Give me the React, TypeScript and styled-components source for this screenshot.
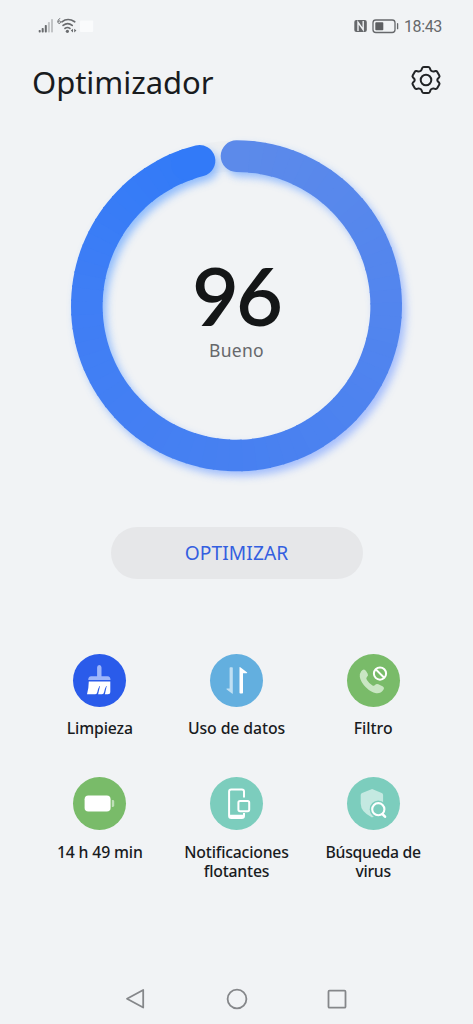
import React from "react";
import styled, { createGlobalStyle } from "styled-components";

const GlobalStyle = createGlobalStyle`
  * { box-sizing: border-box; }
  body {
    margin: 0;
    background: #f1f3f5;
    color: #191b1e;
    font-family: "Noto Sans", "Open Sans", sans-serif;
  }
  svg { display: block; flex: none; }
`;

const Screen = styled.main`
  width: 473px;
  height: 1024px;
  display: flex;
  flex-direction: column;
  overflow: hidden;
  background: #f1f3f5;
`;

const StatusBar = styled.div`
  height: 52px;
  padding: 0 31px 0 38px;
  display: flex;
  align-items: center;
  justify-content: space-between;
`;

const StatusTime = styled.span`
  width: 38px;
  color: #66686b;
  font: 400 16px/20px Roboto, sans-serif;
  letter-spacing: -0.4px;
  padding-top: 1px;
  white-space: nowrap;
`;

const StatusGroup = styled.div`
  display: flex;
  align-items: center;
  gap: 5px;
`;

const Header = styled.header`
  height: 56px;
  padding: 0 31px 0 32px;
  display: flex;
  align-items: center;
  justify-content: space-between;
`;

const Title = styled.h1`
  margin: 0;
  padding-top: 3px;
  font-size: 31px;
  font-weight: 400;
  line-height: 44px;
  letter-spacing: -0.05px;
`;

const Gauge = styled.section`
  height: 388px;
  margin-top: 4px;
  display: grid;
  > * { grid-area: 1 / 1; }
`;

const ScoreBlock = styled.div`
  display: flex;
  flex-direction: column;
  align-items: center;
  padding-top: 141px;
`;

const Score = styled.div`
  font-family: Lato, sans-serif;
  font-size: 81px;
  font-weight: 600;
  line-height: 84px;
  letter-spacing: -3px;
  margin-right: 1px;
  color: #141617;
`;

const Rating = styled.div`
  margin-top: 1px;
  font-size: 17.5px;
  line-height: 24px;
  letter-spacing: 0.3px;
  color: #66686b;
`;

const OptimizeButton = styled.button`
  align-self: center;
  margin: 27px 0 0;
  width: 252px;
  height: 52px;
  border: 0;
  border-radius: 26px;
  background: #e6e7e9;
  color: #345fe0;
  font: 400 19.2px/26px "Noto Sans", sans-serif;
  letter-spacing: 0.1px;
`;

const Tools = styled.section`
  margin: 74.5px 31.5px 0;
  display: grid;
  grid-template-columns: repeat(3, 1fr);
  grid-auto-rows: 123.5px;
`;

const Tool = styled.div`
  display: flex;
  flex-direction: column;
  align-items: center;
  gap: 12.5px;
`;

const ToolIcon = styled.div<{ $color: string }>`
  width: 53px;
  height: 53px;
  border-radius: 50%;
  background: ${(p) => p.$color};
`;

const ToolLabel = styled.div<{ $spacing: number }>`
  font-size: 15.8px;
  font-weight: 500;
  line-height: 19px;
  letter-spacing: ${(p) => p.$spacing}px;
  text-align: center;
  white-space: pre-line;
`;

const NavBar = styled.nav`
  margin-top: auto;
  height: 51px;
  padding: 0 125px;
  display: flex;
  align-items: center;
  justify-content: space-between;
`;

const CX = 236.5;
const CY = 193.8;
const R = 149.7;
const STOPS: [number, number[]][] = [
  [0, [92, 138, 234]],
  [90, [82, 133, 238]],
  [180, [71, 128, 241]],
  [270, [63, 126, 245]],
  [345.7, [49, 122, 248]],
];

const point = (deg: number) => {
  const a = (deg * Math.PI) / 180;
  return `${(CX + R * Math.sin(a)).toFixed(2)} ${(CY - R * Math.cos(a)).toFixed(2)}`;
};

const colorAt = (deg: number) => {
  let i = 0;
  while (i < STOPS.length - 2 && deg > STOPS[i + 1][0]) i++;
  const [a, from] = STOPS[i];
  const [b, to] = STOPS[i + 1];
  const t = Math.min(1, (deg - a) / (b - a));
  return `rgb(${from.map((v, k) => Math.round(v + (to[k] - v) * t)).join(",")})`;
};

const END = 345.7;
const STEPS = 70;

const Ring = () => (
  <svg width="473" height="388" viewBox="0 0 473 388" fill="none">
    <defs>
      <filter id="glow" x="-10%" y="-10%" width="125%" height="125%">
        <feGaussianBlur stdDeviation="4" />
      </filter>
      <linearGradient id="glowFill" gradientUnits="userSpaceOnUse" x1="90" y1="90" x2="370" y2="310">
        <stop stopColor="#69a9ff" />
        <stop offset="1" stopColor="#8cabff" />
      </linearGradient>
    </defs>
    <circle cx={CX} cy={CY} r={R} stroke="#edeff1" strokeWidth="31" />
    <path
      d={`M${point(0)}A${R} ${R} 0 1 1 ${point(END)}`}
      stroke="url(#glowFill)"
      strokeWidth="31"
      strokeLinecap="round"
      filter="url(#glow)"
      transform="translate(4 5)"
      opacity=".75"
    />
    {Array.from({ length: STEPS }, (_, i) => {
      const from = (END / STEPS) * i;
      const to = Math.min(END, (END / STEPS) * (i + 1) + 0.6);
      return (
        <path
          key={i}
          d={`M${point(from)}A${R} ${R} 0 0 1 ${point(to)}`}
          stroke={colorAt(from)}
          strokeWidth="31.6"
          strokeLinecap={i === 0 || i === STEPS - 1 ? "round" : "butt"}
        />
      );
    })}
  </svg>
);

const SignalIcons = () => (
  <svg width="56" height="20" viewBox="38 16 56 20" fill="none">
    <g fill="#696b6e">
      <rect x="38.7" y="30" width="2" height="2.5" rx=".7" />
      <rect x="41.7" y="28" width="2" height="4.5" rx=".7" />
      <rect x="44.8" y="25" width="2" height="7.5" rx=".7" />
      <g opacity=".35">
        <rect x="47.9" y="22" width="2" height="10.5" rx=".7" />
        <rect x="51" y="19" width="2" height="13.5" rx=".7" />
      </g>
      <circle cx="67.4" cy="31.3" r="1.6" />
      <path d="M73 28.8v3.6l-2.2-1.8zM74.2 28.8v3.6l2.2-1.8z" />
    </g>
    <path d="M60.2 18.5c-1.6.4-2.3 1.6-2.3 3.3 0 1 .5 1.7 1.3 1.7s1.3-.6 1.3-1.4-.5-1.3-1.2-1.3-1.2.5-1.3 1" stroke="#696b6e" strokeWidth="1" />
    <path d="M61.9 21.8q6-4.6 12.8 0M63.1 25.4q4.6-3.7 9.1 0M65 28.4q2.4-1.8 4.9 0" stroke="#696b6e" strokeWidth="1.7" strokeLinecap="round" />
    <rect x="80" y="20.5" width="13.2" height="11.5" rx="1" fill="#fafbfc" />
  </svg>
);

const PowerIcons = () => (
  <svg width="46" height="18" viewBox="354 17 46 18" fill="none">
    <path d="M357.3 20h8.5q2 0 2 2v8q0 2-2 2h-8.5q-2 0-2-2v-8q0-2 2-2z" fill="#66686b" />
    <path d="M359 31v-8.7l5.2 7.4V21" stroke="#f1f3f5" strokeWidth="1.4" />
    <rect x="374" y="20" width="22" height="12.5" rx="2.8" stroke="#66686b" strokeWidth="1.3" />
    <rect x="376.3" y="22.3" width="8" height="8" rx=".8" fill="#5d5f62" />
    <path d="M398.6 23.7v5" stroke="#66686b" strokeWidth="1.3" strokeLinecap="round" />
  </svg>
);

const GearIcon = () => (
  <svg width="32" height="32" viewBox="-16 -16 32 32" fill="none" stroke="#222426" strokeWidth="2" strokeLinejoin="round">
    <path d="M-2.2-13.1h4.4q1.2 0 1.6 1.1l.6 1.7q.4 1 1.4 1.4 1 .5 2 .3l1.7-.3q1.2-.2 1.8.8l2 3.5q.6 1-.2 1.9l-1.1 1.2q-.7.7-.7 1.5t.7 1.5l1.1 1.2q.8.9.2 1.9l-2 3.5q-.6 1-1.8.8l-1.7-.3q-1-.2-2 .3-1 .4-1.4 1.4l-.6 1.7q-.4 1.1-1.6 1.1h-4.4q-1.2 0-1.6-1.1l-.6-1.7q-.4-1-1.4-1.4-1-.5-2-.3l-1.7.3q-1.2.2-1.8-.8l-2-3.5q-.6-1 .2-1.9l1.1-1.2q.7-.7.7-1.5t-.7-1.5l-1.1-1.2q-.8-.9-.2-1.9l2-3.5q.6-1 1.8-.8l1.7.3q1 .2 2-.3 1-.4 1.4-1.4l.6-1.7q.4-1.1 1.6-1.1z" />
    <circle r="5.3" />
  </svg>
);

const Glyph = ({ children }: { children: React.ReactNode }) => (
  <svg width="53" height="53" viewBox="0 0 53 53" fill="none">{children}</svg>
);

const tools = [
  {
    label: "Limpieza", color: "#2a5bea", spacing: -0.15,
    glyph: (
      <Glyph>
        <path d="M24.1 22.2v-8.6q0-2.6 2.2-2.6t2.2 2.6v8.6h6q3 0 3 3.8H15.2q0-3.8 3-3.8z" fill="#9eb6fa" />
        <path d="M15.8 27.6h21.5v10.2q0 2.5-2.5 2.5h-2.9l1.8-8.3h-.5q-1.4 2.5-2 5.8-.5 2.5-2.2 2.5h-3.9l1.9-8.3h-.5q-1.5 2.5-2.1 5.8-.5 2.5-2.1 2.5h-8.3q1.7-5.8 1.8-12.7z" fill="#fff" />
      </Glyph>
    ),
  },
  {
    label: "Uso de datos", color: "#63afdf", spacing: -0.1,
    glyph: (
      <Glyph>
        <path d="M22.8 14v25.2q0 .9-.8.3l-5.3-4q-1-.9.5-.9h2.4V14q0-.8.8-.8h1.6q.8 0 .8.8z" fill="#c0e0f3" />
        <path d="M29.5 38.7V13.5q0-.9.8-.3l6.6 5.1q1 .9-.5.9h-3.4v19.5q0 .8-.8.8h-1.9q-.8 0-.8-.8z" fill="#fff" />
      </Glyph>
    ),
  },
  {
    label: "Filtro", color: "#79bb69", spacing: 0,
    glyph: (
      <Glyph>
        <path d="M14.2 17.2q2.8-3.3 5 0l1.5 2.6q1 2-.8 3.3-1.2 1 0 2.8 2 3.3 5.6 5.5 1.6.9 2.5-.3 1.4-1.8 3.4-.8l4.1 2q2.5 1.6.7 3.8-2.6 3.7-7.1 3.1-5.2-.8-10.3-5.9-5.3-5.4-6-10.5-.4-3.2 1.4-5.6z" fill="#c9e6c3" />
        <circle cx="33" cy="19.6" r="6.1" stroke="#fff" strokeWidth="2" />
        <path d="m28.8 15.4 8.4 8.4" stroke="#fff" strokeWidth="2" />
      </Glyph>
    ),
  },
  {
    label: "14 h 49 min", color: "#79bb69", spacing: -0.15,
    glyph: (
      <Glyph>
        <rect x="11.6" y="18.4" width="26" height="16.2" rx="3.8" fill="#fff" />
        <path d="M38.8 23.1h1q1.4 0 1.4 1.4v4q0 1.4-1.4 1.4h-1z" fill="#bfdfb8" />
      </Glyph>
    ),
  },
  {
    label: "Notificaciones\nflotantes", color: "#7ccdbd", spacing: -0.2,
    glyph: (
      <Glyph>
        <path d="M34 20.6v-6q0-2.2-2.2-2.2H21.3q-2.2 0-2.2 2.2v24.2q0 2.2 2.2 2.2h10.5q2.2 0 2.2-2.2V36" stroke="#fff" strokeWidth="2" />
        <path d="M19 37.7h15v1.1q0 2.2-2.2 2.2H21.2Q19 41 19 38.8z" fill="#fff" />
        <rect x="28.4" y="24" width="10.8" height="10.2" rx="1.6" stroke="#fff" strokeWidth="2" />
      </Glyph>
    ),
  },
  {
    label: "Búsqueda de\nvirus", color: "#7ccdbd", spacing: -0.3,
    glyph: (
      <Glyph>
        <path d="m25.1 12.1 9.6 3.8q1.4.6 1.4 2v8.7q0 8.5-11.1 13.8-11.3-5.3-11.3-13.8v-8.7q0-1.4 1.4-2z" fill="#c4e9e1" />
        <circle cx="31.3" cy="32.2" r="8.6" fill="#7ccdbd" />
        <circle cx="31.3" cy="32.2" r="6.1" stroke="#fff" strokeWidth="2.1" />
        <path d="m35.5 37.1 2.5 2.6" stroke="#fff" strokeWidth="2.6" strokeLinecap="round" />
      </Glyph>
    ),
  },
];

export default function App() {
  return (
    <Screen>
      <GlobalStyle />
      <StatusBar>
        <SignalIcons />
        <StatusGroup>
          <PowerIcons />
          <StatusTime>18:43</StatusTime>
        </StatusGroup>
      </StatusBar>
      <Header>
        <Title>Optimizador</Title>
        <GearIcon />
      </Header>
      <Gauge>
        <Ring />
        <ScoreBlock>
          <Score>96</Score>
          <Rating>Bueno</Rating>
        </ScoreBlock>
      </Gauge>
      <OptimizeButton>OPTIMIZAR</OptimizeButton>
      <Tools>
        {tools.map((t) => (
          <Tool key={t.label}>
            <ToolIcon $color={t.color}>{t.glyph}</ToolIcon>
            <ToolLabel $spacing={t.spacing}>{t.label}</ToolLabel>
          </Tool>
        ))}
      </Tools>
      <NavBar>
        <svg width="22" height="24" viewBox="0 0 22 24" fill="none" stroke="#85878a" strokeWidth="1.8" strokeLinejoin="round">
          <path d="M18.2 3v17.5L2 11.8z" />
        </svg>
        <svg width="22" height="22" viewBox="0 0 22 22" fill="none" stroke="#85878a" strokeWidth="1.8">
          <circle cx="11" cy="11" r="9.4" />
        </svg>
        <svg width="22" height="22" viewBox="0 0 22 22" fill="none" stroke="#85878a" strokeWidth="1.8">
          <rect x="2.5" y="2.7" width="17" height="17" rx="1" />
        </svg>
      </NavBar>
    </Screen>
  );
}
